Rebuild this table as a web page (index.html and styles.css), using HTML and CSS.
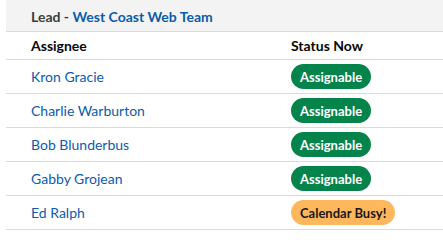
FILE: index.html
```html
<!DOCTYPE html>
<html>
<head>
<meta charset="utf-8">
<link rel="stylesheet" href="styles.css">
</head>
<body>
<div class="panel">
  <div class="title"><span class="lead">Lead - </span><a class="team">West Coast Web Team</a></div>
  <div class="table">
    <div class="row head">
      <div class="c1">Assignee</div>
      <div class="c2">Status Now</div>
    </div>
    <div class="row">
      <div class="c1"><a class="name">Kron Gracie</a></div>
      <div class="c2"><span class="badge ok">Assignable</span></div>
    </div>
    <div class="row">
      <div class="c1"><a class="name">Charlie Warburton</a></div>
      <div class="c2"><span class="badge ok">Assignable</span></div>
    </div>
    <div class="row">
      <div class="c1"><a class="name">Bob Blunderbus</a></div>
      <div class="c2"><span class="badge ok">Assignable</span></div>
    </div>
    <div class="row">
      <div class="c1"><a class="name">Gabby Grojean</a></div>
      <div class="c2"><span class="badge ok">Assignable</span></div>
    </div>
    <div class="row">
      <div class="c1"><a class="name">Ed Ralph</a></div>
      <div class="c2"><span class="badge busy">Calendar Busy!</span></div>
    </div>
  </div>
</div>
</body>
</html>
```
FILE: styles.css
```css
html, body {
  margin: 0;
  padding: 0;
  background: #ffffff;
}
body {
  font-family: Lato, "Open Sans", sans-serif;
  font-size: 14px;
  color: #080707;
}
.panel {
  margin-left: 6px;
}
.title {
  height: 32px;
  box-sizing: border-box;
  background: #f3f3f3;
  border-bottom: 1px solid #dddbda;
  padding-left: 25px;
  padding-top: 1px;
  display: flex;
  align-items: center;
  font-weight: bold;
}
.lead {
  color: #3e3e3c;
  white-space: pre;
}
.team {
  color: #0b5cab;
}
.row {
  display: grid;
  grid-template-columns: 285px 1fr;
  height: 34px;
  box-sizing: border-box;
  border-bottom: 1px solid #dddbda;
  align-items: center;
}
.row.head {
  height: 28px;
  font-weight: bold;
}
.c1 {
  padding-left: 25px;
}
.name {
  color: #0b5cab;
}
.badge {
  display: inline-flex;
  align-items: center;
  height: 25px;
  padding: 0 9px;
  border-radius: 13px;
  font-weight: bold;
  font-size: 13px;
}
.badge.ok {
  background: #04844b;
  color: #ffffff;
}
.badge.busy {
  background: #ffb75d;
  color: #181818;
}
```
